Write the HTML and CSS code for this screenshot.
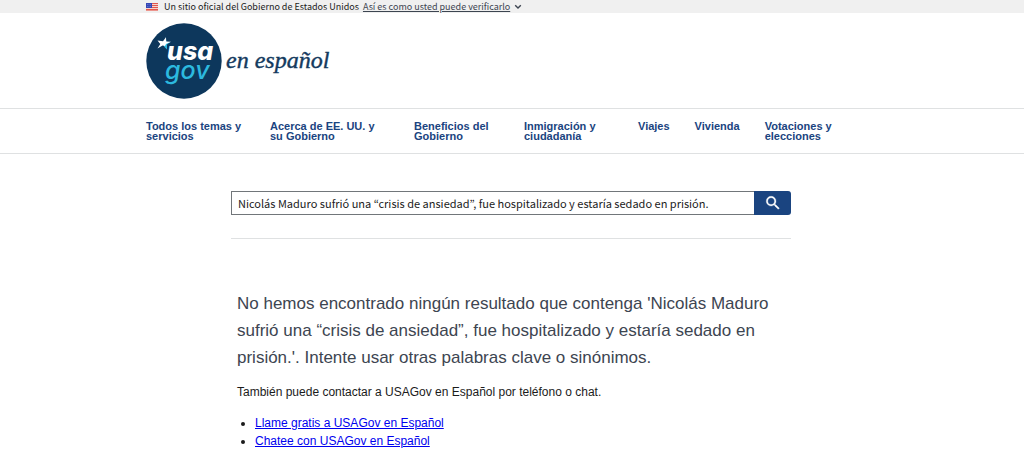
FILE: index.html
```
<!DOCTYPE html>
<html lang="es">
<head>
  <meta charset="utf-8">
  <meta name="viewport" content="width=device-width, initial-scale=1">
  <title>USAGov en Español</title>
  <link rel="stylesheet" href="styles.css">
</head>
<body>
  <div class="banner">
    <div class="container banner-inner">
      <svg class="flag" viewBox="0 0 12 8" aria-hidden="true">
        <rect width="12" height="8" fill="#f6d3cd"/>
        <path d="M0 .5h12M0 2.5h12M0 4.5h12M0 6.5h12" stroke="#e2574c"/>
        <rect y="7.5" width="12" height=".5" fill="#e2574c"/>
        <rect width="6" height="5" fill="#3447b5"/>
        <path d="M1 1.5h4M1 3.5h4" stroke="#8f9ae0" stroke-width=".6" stroke-dasharray=".8 .8"/>
      </svg>
      <span>Un sitio oficial del Gobierno de Estados Unidos</span>
      <button type="button" class="banner-btn">
        <span class="banner-link">Así es como usted puede verificarlo</span>
        <svg class="chevron" viewBox="0 0 8 6" aria-hidden="true"><path d="M1.2 1.3 4 4.1l2.8-2.8" fill="none" stroke="#3d4551" stroke-width="1.4"/></svg>
      </button>
    </div>
  </div>

  <header class="header">
    <div class="container">
      <a class="logo" href="#">
        <svg viewBox="0 0 192 76" role="img" aria-label="USAGov en español">
          <circle cx="38" cy="38" r="37.7" fill="#0d375c"/>
          <path d="M19.500 14l1 5h4l-3.500 2.500 0 5-3-3z" fill="#2cb9df"/>
          <path d="M11.500 17.500l5.500.8 3-4 .2 4.200 4.800.2-5 2.300-1 2-2.500-.5-5 3 2.800-4.500z" fill="#fff"/>
          <text class="logo-word logo-usa" x="21" y="37">usa</text>
          <text class="logo-word logo-gov" x="19" y="56">gov</text>
          <text class="logo-script" x="80" y="45">en español</text>
        </svg>
      </a>
    </div>
  </header>

  <nav class="nav" aria-label="Navegación principal">
    <ul class="container nav-list">
      <li class="nav-temas"><a href="#">Todos los temas y servicios</a></li>
      <li class="nav-gobierno"><a href="#">Acerca de EE. UU. y su Gobierno</a></li>
      <li class="nav-beneficios"><a href="#">Beneficios del Gobierno</a></li>
      <li class="nav-inmigracion"><a href="#">Inmigración y ciudadanía</a></li>
      <li><a href="#">Viajes</a></li>
      <li><a href="#">Vivienda</a></li>
      <li class="nav-votaciones"><a href="#">Votaciones y elecciones</a></li>
    </ul>
  </nav>

  <main class="container main">
    <form class="search" role="search">
      <input class="search-input" type="search" aria-label="Buscar" value="Nicolás Maduro sufrió una “crisis de ansiedad”, fue hospitalizado y estaría sedado en prisión.">
      <button class="search-btn" type="button" aria-label="Buscar">
        <svg viewBox="0 0 24 24" aria-hidden="true"><path fill="#fff" stroke="#fff" stroke-width=".4" d="M15.500 14h-.79l-.28-.27A6.471 6.471 0 0 0 16 9.500 6.500 6.500 0 1 0 9.500 16c1.610 0 3.090-.59 4.230-1.570l.27.28v.79l5 4.990L20.490 19l-4.990-5zm-6 0C7.010 14 5 11.990 5 9.500S7.010 5 9.500 5 14 7.010 14 9.500 11.990 14 9.500 14z"/></svg>
      </button>
    </form>

    <div class="results">
      <p class="no-results">No hemos encontrado ningún resultado que contenga 'Nicolás Maduro sufrió una “crisis de ansiedad”, fue hospitalizado y estaría sedado en prisión.'. Intente usar otras palabras clave o sinónimos.</p>
      <p class="contact">También puede contactar a USAGov en Español por teléfono o chat.</p>
      <ul class="contact-list">
        <li><a href="#">Llame gratis a USAGov en Español</a></li>
        <li><a href="#">Chatee con USAGov en Español</a></li>
      </ul>
    </div>
  </main>
</body>
</html>
```

FILE: styles.css
```
* {
  box-sizing: border-box;
}

body {
  margin: 0;
  background-color: #fff;
  color: #1b1b1b;
  font-family: "Liberation Sans", Arial, sans-serif;
  font-size: 12px;
}

.container {
  max-width: 732px;
  margin: 0 auto;
}

.banner {
  background-color: #f0f0f0;
  font-family: "Noto Sans CJK KR", sans-serif;
  font-size: 9px;
  line-height: 13px;
  color: #1b1b1b;
}

.banner-inner {
  display: flex;
  align-items: center;
}

.flag {
  width: 12px;
  height: 8px;
  margin-right: 6px;
}

.banner-btn {
  display: flex;
  align-items: center;
  gap: 4px;
  margin-left: 4px;
  padding: 0;
  border: none;
  background: none;
  font: inherit;
  color: #3d4551;
  cursor: pointer;
}

.banner-link {
  text-decoration: underline;
}

.chevron {
  width: 8px;
  height: 6px;
}

.header {
  padding: 10px 0 9px;
}

.logo {
  display: block;
  width: 192px;
}

.logo svg {
  display: block;
  width: 100%;
}

.logo-word {
  font-family: Inter, sans-serif;
  font-weight: 800;
  font-style: italic;
  font-size: 25px;
}

.logo-usa {
  fill: #fff;
}

.logo-gov {
  fill: #2cb9df;
  font-weight: 500;
}

.logo-script {
  font-family: "Liberation Serif", serif;
  font-style: italic;
  font-size: 24px;
  fill: #143a5e;
  stroke: #143a5e;
  stroke-width: 0.4px;
}

.nav {
  border-top: 1px solid #dfe1e2;
  border-bottom: 1px solid #dfe1e2;
}

.nav-list {
  display: flex;
  gap: 25px;
  padding: 12px 0;
  list-style: none;
  font-size: 11px;
  font-weight: bold;
  line-height: 10px;
}

.nav-list a {
  color: #1a4480;
  text-decoration: none;
}

.nav-temas {
  width: 99px;
}

.nav-gobierno {
  width: 119px;
}

.nav-beneficios {
  width: 85px;
}

.nav-inmigracion {
  width: 89px;
}

.nav-votaciones {
  width: 80px;
}

.main {
  padding: 37px 87px 0 85px;
}

.search {
  display: flex;
  padding-bottom: 23px;
  border-bottom: 1px solid #dfe1e2;
}

.search-input {
  flex: 1;
  min-width: 0;
  height: 24px;
  padding: 0 6px;
  border: 1px solid #71767a;
  border-right: none;
  border-radius: 0;
  font-family: "Noto Sans CJK KR", sans-serif;
  font-size: 11px;
  color: #1b1b1b;
  appearance: none;
}

.search-btn {
  display: flex;
  align-items: center;
  justify-content: center;
  width: 37px;
  padding: 0;
  border: none;
  border-radius: 0 3px 3px 0;
  background-color: #1a4480;
  cursor: pointer;
}

.search-btn svg {
  width: 18px;
  height: 18px;
}

.results {
  padding: 51px 6px 0;
}

.no-results {
  margin: 0;
  font-size: 17px;
  line-height: 27px;
  color: #3d4551;
}

.contact {
  margin: 12px 0 13px;
  line-height: 18px;
}

.contact-list {
  margin: 0;
  padding-left: 18px;
  line-height: 18px;
}

.contact-list a {
  color: #0000ee;
}
```
